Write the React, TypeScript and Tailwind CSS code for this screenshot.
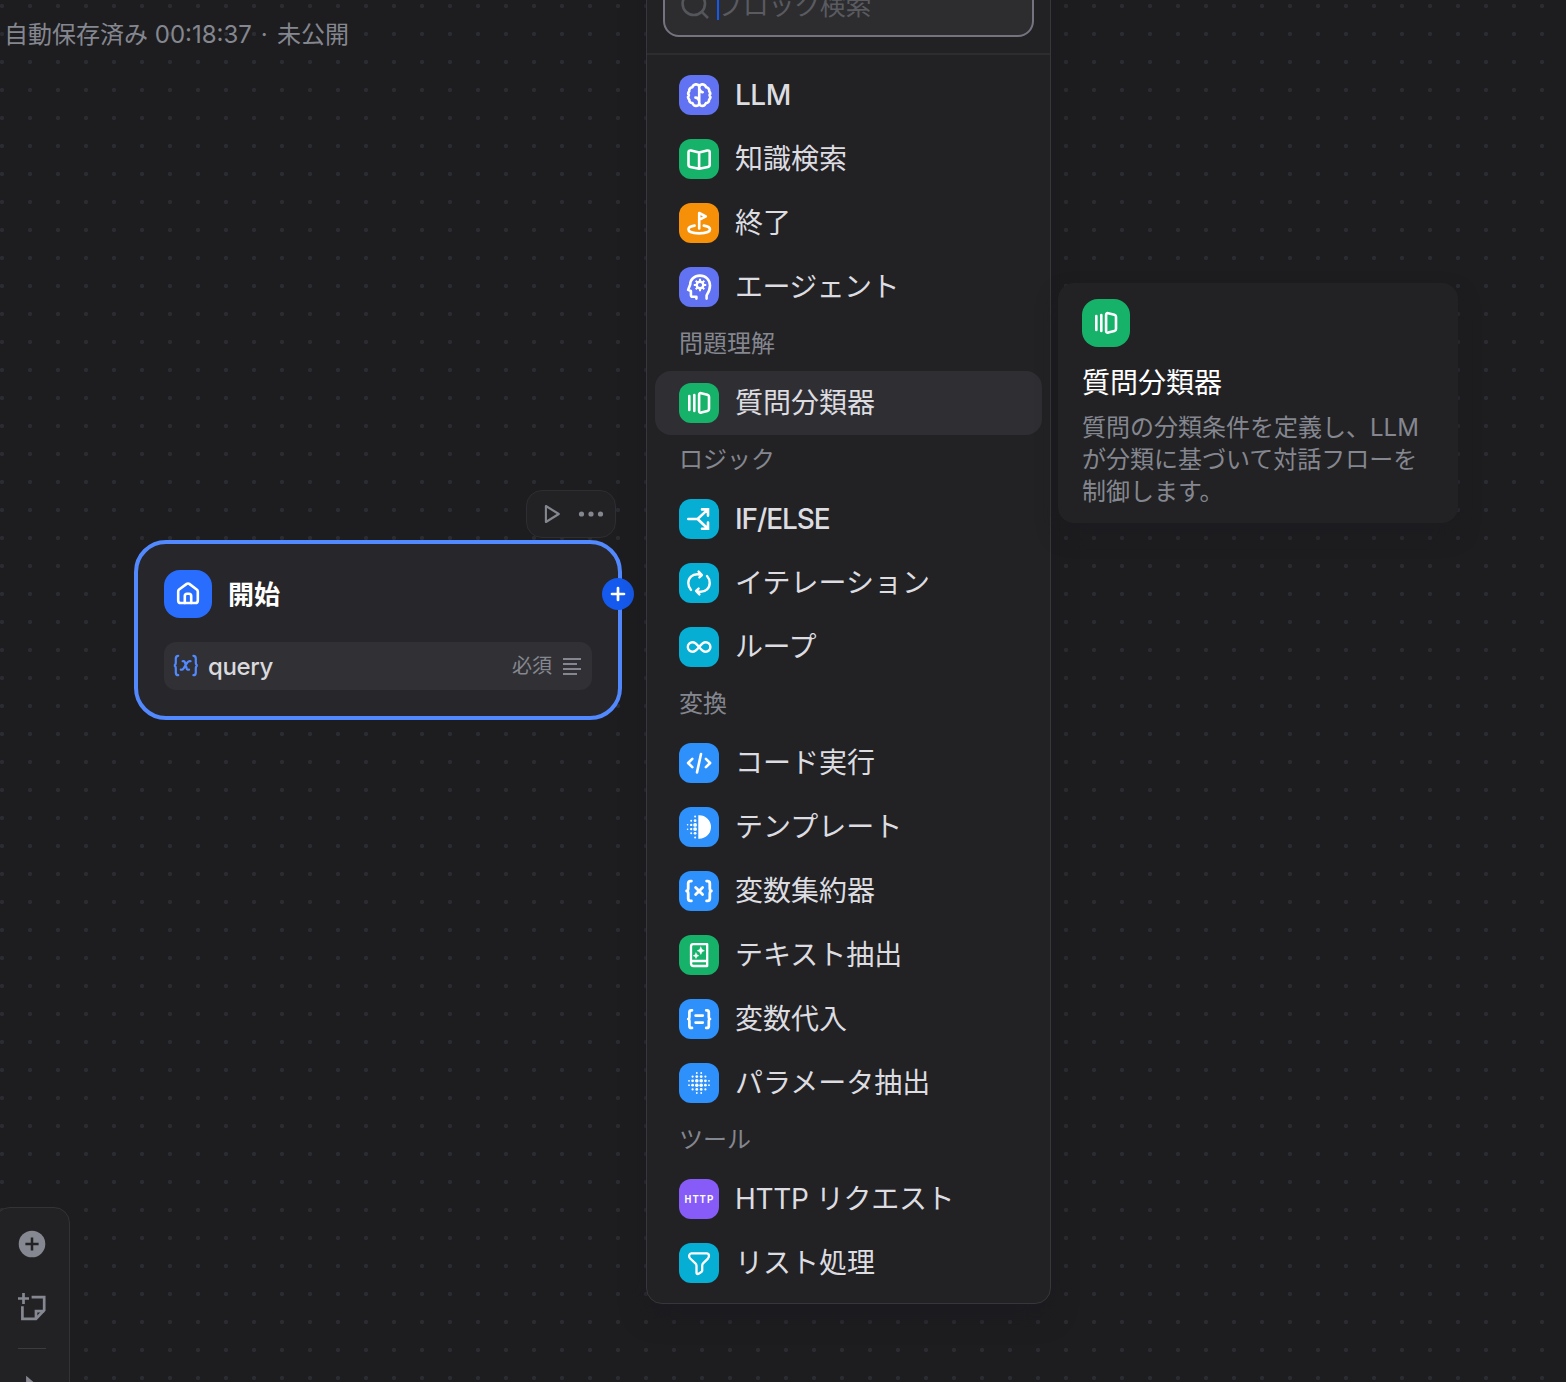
import React from 'react';

type IconName =
  | 'llm' | 'knowledge' | 'end' | 'agent' | 'classifier' | 'branch' | 'iteration' | 'loop'
  | 'code' | 'template' | 'aggregate' | 'document' | 'assign' | 'parameter' | 'http' | 'list';

const BRAIN_HALF =
  'M20.2 11.3C19.6 9.8 18.2 9.2 16.7 9.4C15 9.6 13.8 10.7 13.4 12.2C11.3 12.5 9.8 14.2 10.2 16.3C9 17.5 8.9 18.9 9.9 20.1C8.8 21.5 9 23.5 10.3 24.7C10.2 26.7 11.5 28.2 13.5 28.1C14.1 29.8 15.4 30.9 17 30.9C18.6 30.9 19.7 30.2 20.2 28.9';

const TEMPLATE_DOTS: [number, number, number][] = [
  [8.6, 17.8, 0.8], [8.6, 22.2, 0.8],
  [12.2, 13.8, 1], [12.2, 17.9, 1.2], [12.2, 22.1, 1.2], [12.2, 26.2, 1],
  [16.1, 9.6, 1], [16.1, 13.7, 1.4], [16.1, 17.9, 1.9], [16.1, 22.1, 1.9], [16.1, 26.3, 1.4], [16.1, 30.6, 1],
];

const GRID = [10, 13.6, 17.8, 22.2, 26.4, 30];
const GRID_RADIUS = [
  [0, 0, 0.9, 0.9, 0, 0],
  [0, 1.1, 1.4, 1.4, 1.1, 0],
  [0.9, 1.4, 1.8, 1.8, 1.4, 0.9],
  [0.9, 1.4, 1.8, 1.8, 1.4, 0.9],
  [0, 1.1, 1.4, 1.4, 1.1, 0],
  [0, 0, 0.9, 0.9, 0, 0],
];

const glyphs: Record<IconName, React.ReactNode> = {
  llm: (
    <>
      <path d={BRAIN_HALF} />
      <path d={BRAIN_HALF} transform="translate(40.4 0) scale(-1 1)" />
      <path d="M20.2 11v18M20.6 14.2c.3 1.8 1.4 2.8 3.2 3M19.8 25.4c-.2-1.8-1.4-2.8-3.4-2.8" />
    </>
  ),
  knowledge: (
    <path d="M20.1 13.6V29.6M20.1 13.6L12 11.6Q9.5 11.1 9.5 13.5V25.7Q9.5 27.5 11.3 27.9L20.1 29.8L28.9 27.9Q30.7 27.5 30.7 25.7V13.5Q30.7 11.1 28.2 11.6Z" />
  ),
  end: (
    <path d="M20.2 25.5V10L26.8 13.3L20.2 16.8M15.6 22.6C11.6 23.2 9.4 24.6 9.4 26.3C9.4 28.7 14 30.4 20.2 30.4S31 28.7 31 26.3C31 24.6 28.8 23.2 24.8 22.6" />
  ),
  agent: (
    <>
      <path d="M27.6 31.6V28.4C29.6 25.4 31 22 31 18.6C31 12.6 26.6 8.6 20.9 8.6C15.2 8.6 11.2 12.7 11.2 17.5L9.1 22.9L11.9 24V28Q11.9 29.8 13.7 29.8H17.4V31.6" />
      <circle cx="21" cy="18" r="3.3" strokeWidth="2.4" />
      <path strokeWidth="2" strokeLinecap="butt" d="M21 11.8v2.6M21 21.6v2.6M14.8 18h2.6M24.6 18h2.6M16.7 13.7l1.9 1.9M23.4 20.4l1.9 1.9M16.7 22.3l1.9-1.9M23.4 15.6l1.9-1.9" />
    </>
  ),
  classifier: (
    <path d="M10.3 13V27M15.3 12V28M20.1 12Q20.1 9.8 22.2 10.2L28.4 11.7Q30 12.1 30 13.8V26Q30 27.7 28.4 28.1L22.2 29.6Q20.1 30 20.1 27.8Z" />
  ),
  branch: (
    <path strokeLinejoin="miter" d="M9.3 20H18.6L28.4 10.9M18.6 20L28.4 29.3M23 10.4H29V16.6M23 29.8H29V23.6" />
  ),
  iteration: (
    <path strokeWidth="2.4" d="M12 27C10.2 25.1 9.3 22.7 9.3 20C9.3 14.6 13.4 11.2 18.2 11.2C19.8 11.2 21.1 11.5 22.3 11.9M19.6 8.6L22.9 12.1L20.4 14.4M28 13C29.8 14.9 30.7 17.3 30.7 20C30.7 25.4 26.6 28.8 21.8 28.8C20.2 28.8 18.9 28.5 17.7 28.1M20.4 31.4L17.1 27.9L19.6 25.6" />
  ),
  loop: (
    <path strokeWidth="2.4" d="M20.1 20C17.6 16.8 16 15.2 13.6 15.2A4.8 4.8 0 0 0 13.6 24.8C16 24.8 17.6 23.2 20.1 20C22.6 16.8 24.2 15.2 26.6 15.2A4.8 4.8 0 0 1 26.6 24.8C24.2 24.8 22.6 23.2 20.1 20Z" />
  ),
  code: <path d="M13.3 15.8L9.1 20L13.3 24.2M26.9 15.8L31.1 20L26.9 24.2M22 11L18 29.4" />,
  template: (
    <g fill="currentColor" stroke="none">
      <path d="M19.3 8.2H20.2A11.8 11.8 0 0 1 20.2 31.8H19.3Z" />
      {TEMPLATE_DOTS.map(([x, y, r], i) => <circle key={i} cx={x} cy={y} r={r} />)}
    </g>
  ),
  aggregate: (
    <path strokeWidth="2.8" d="M12.4 10.1H11.4Q9.2 10.1 9.2 12.4V17Q9.2 20 7.6 20Q9.2 20 9.2 23V27.6Q9.2 29.9 11.4 29.9H12.4M27.6 10.1H28.6Q30.8 10.1 30.8 12.4V17Q30.8 20 32.4 20Q30.8 20 30.8 23V27.6Q30.8 29.9 28.6 29.9H27.6M16.6 16.4L23.6 23.6M23.6 16.4L16.6 23.6" />
  ),
  document: (
    <>
      <path strokeWidth="2.3" d="M12 27.8V11.4Q12 9.2 14.2 9.2H28.2V26H13.8Q12 26 12 28.2Q12 31 14.6 31H28.2V26" />
      <path fill="currentColor" stroke="currentColor" strokeWidth="0.5" d="M21.8 12L23 14.6L25.4 15.7L23 16.8L21.8 19.4L20.6 16.8L18.2 15.7L20.6 14.6ZM17 17.9L17.9 19.8L19.8 20.7L17.9 21.6L17 23.5L16.1 21.6L14.2 20.7L16.1 19.8Z" />
    </>
  ),
  assign: (
    <path strokeWidth="2.7" d="M13 11.3H12.2Q10.4 11.3 10.4 13.3V17.4Q10.4 20 9.2 20Q10.4 20 10.4 22.6V26.9Q10.4 28.9 12.2 28.9H13M27.2 11.3H28Q29.8 11.3 29.8 13.3V17.4Q29.8 20 31 20Q29.8 20 29.8 22.6V26.9Q29.8 28.9 28 28.9H27.2M16.6 16.6H23.8M16.6 23.6H23.8" />
  ),
  parameter: (
    <g fill="currentColor" stroke="none">
      {GRID_RADIUS.map((row, y) =>
        row.map((r, x) => (r ? <circle key={`${x}-${y}`} cx={GRID[x]} cy={GRID[y]} r={r} /> : null)),
      )}
    </g>
  ),
  http: (
    <text x="5.6" y="24" fill="currentColor" stroke="none" fontSize="11.6" fontWeight="700" fontFamily="'Liberation Sans', sans-serif" letterSpacing="1.6" textLength="30" lengthAdjust="spacingAndGlyphs">
      HTTP
    </text>
  ),
  list: (
    <path strokeWidth="2.3" d="M12.4 10.4H27.8C30.2 10.4 30.6 13.4 28.9 15.6L24.3 20.1Q23.2 21.2 23.2 22.8V27.6Q23.2 28.6 22.3 29.1L19.2 30.9Q17.6 31.3 17.5 29.6V22.8Q17.5 21.4 16.4 20.4L11.2 15.5C9.4 13.4 10 10.4 12.4 10.4Z" />
  ),
};

function Glyph({ name, large }: { name: IconName; large?: boolean }) {
  return (
    <svg
      viewBox={large ? '-4 -4 48 48' : '0 0 40 40'}
      className="size-full text-white"
      fill="none"
      stroke="currentColor"
      strokeWidth="2.6"
      strokeLinecap="round"
      strokeLinejoin="round"
    >
      {glyphs[name]}
    </svg>
  );
}

interface Block { name: string; icon: IconName; color: string; active?: boolean; tracking?: string }
interface Group { title?: string; blocks: Block[] }

const INDIGO = 'bg-[#6172f3]';
const GREEN = 'bg-[#17b26a]';
const CYAN = 'bg-[#06aed4]';
const BLUE = 'bg-[#2e90fa]';

const groups: Group[] = [
  {
    blocks: [
      { name: 'LLM', icon: 'llm', color: INDIGO, tracking: 'font-[450] tracking-[-0.5px]' },
      { name: '知識検索', icon: 'knowledge', color: GREEN },
      { name: '終了', icon: 'end', color: 'bg-[#f79009]' },
      { name: 'エージェント', icon: 'agent', color: INDIGO, tracking: 'tracking-[-0.6px]' },
    ],
  },
  { title: '問題理解', blocks: [{ name: '質問分類器', icon: 'classifier', color: GREEN, active: true }] },
  {
    title: 'ロジック',
    blocks: [
      { name: 'IF/ELSE', icon: 'branch', color: CYAN, tracking: 'font-[450] tracking-[-1.1px]' },
      { name: 'イテレーション', icon: 'iteration', color: CYAN },
      { name: 'ループ', icon: 'loop', color: CYAN, tracking: 'tracking-[-0.4px]' },
    ],
  },
  {
    title: '変換',
    blocks: [
      { name: 'コード実行', icon: 'code', color: BLUE },
      { name: 'テンプレート', icon: 'template', color: BLUE },
      { name: '変数集約器', icon: 'aggregate', color: BLUE },
      { name: 'テキスト抽出', icon: 'document', color: GREEN },
      { name: '変数代入', icon: 'assign', color: BLUE },
      { name: 'パラメータ抽出', icon: 'parameter', color: BLUE },
    ],
  },
  {
    title: 'ツール',
    blocks: [
      { name: 'HTTP リクエスト', icon: 'http', color: 'bg-[#875bf7]', tracking: 'tracking-[-0.35px]' },
      { name: 'リスト処理', icon: 'list', color: CYAN },
    ],
  },
];

function BlockRow({ block }: { block: Block }) {
  return (
    <li className={`flex h-16 items-center gap-4 rounded-2xl px-6 ${block.active ? 'bg-[#2f2f33]' : ''}`}>
      <span className={`size-10 shrink-0 rounded-xl ${block.color}`}>
        <Glyph name={block.icon} />
      </span>
      <span className={`text-[28px] leading-10 whitespace-nowrap text-[#dcdce1] ${block.tracking ?? ''}`}>
        {block.name}
      </span>
    </li>
  );
}

function BlockMenu() {
  return (
    <div className="absolute bottom-[78px] left-[646px] w-[405px] rounded-2xl border border-[#37373b] bg-[#222224] shadow-[0_12px_24px_rgba(27,27,33,0.6)]">
      <div className="border-b-2 border-[#2d2d30] px-4 pt-4 pb-4">
        <div className="flex h-16 items-center rounded-2xl border-2 border-[#747481] bg-[#2d2d2f] pr-4 pl-4">
          <svg viewBox="0 0 28 28" className="size-7 shrink-0" fill="none" stroke="#55565c" strokeWidth="2.6">
            <circle cx="12.8" cy="12.8" r="11.2" />
            <path d="M20.8 20.8L27 27" />
          </svg>
          <span className="ml-2 h-7 w-0.5 translate-y-px bg-[#155aef]" />
          <span className="-ml-0.5 pt-0.5 text-[26px] leading-8 tracking-[-0.3px] text-[#5a5b61]">ブロック検索</span>
        </div>
      </div>
      <div className="p-2">
        {groups.map((group, i) => (
          <section key={i}>
            {group.title && (
              <h3 className="h-[52px] px-6 text-2xl leading-[50px] text-[#858790]">{group.title}</h3>
            )}
            <ul>
              {group.blocks.map((block) => <BlockRow key={block.name} block={block} />)}
            </ul>
          </section>
        ))}
      </div>
    </div>
  );
}

function BlockTooltip() {
  return (
    <div className="absolute top-[283px] left-[1058px] h-60 w-[400px] rounded-2xl bg-[#222224] px-6 pt-4 shadow-[0_12px_20px_rgba(27,27,33,0.5)]">
      <div className="size-12 rounded-2xl bg-[#17b26a]"><Glyph name="classifier" large /></div>
      <h2 className="mt-4 text-[28px] leading-10 text-white">質問分類器</h2>
      <p className="mt-[9px] text-2xl leading-8 text-[#858790]">
        質問の分類条件を定義し、LLM<br />が分類に基づいて対話フローを<br />制御します。
      </p>
    </div>
  );
}

function StartNode() {
  return (
    <div className="absolute top-[540px] left-[134px] h-[180px] w-[488px] rounded-[32px] border-4 border-[#5289ff] bg-[#27272b] p-[26px]">
      <div className="flex items-center gap-4">
        <div className="size-12 rounded-2xl bg-[#296dff]">
          <svg viewBox="0 0 48 48" className="size-full" fill="none" stroke="#fff" strokeWidth="2.6" strokeLinejoin="round" strokeLinecap="round">
            <path d="M14.2 21.5Q14.2 20.3 15.1 19.5L22.7 13.9Q24 13 25.3 13.9L32.7 19.5Q33.8 20.3 33.8 21.5V30.4Q33.8 33 31.2 33H16.8Q14.2 33 14.2 30.4Z" />
            <path d="M20.8 33V26Q20.8 23.8 23 23.8H25Q27.2 23.8 27.2 26V33" />
          </svg>
        </div>
        <span className="pt-0.5 text-[26px] leading-8 font-bold text-white">開始</span>
      </div>
      <div className="mt-6 flex h-12 items-center rounded-xl bg-[#313135] pr-2 pl-2">
        <svg viewBox="0 0 28 24" className="h-6 w-7" fill="none" stroke="#5289ff" strokeWidth="2.2" strokeLinecap="round">
          <path d="M6.2 1.8Q3.8 1.8 3.8 4.6V8.5Q3.8 11.5 1.8 11.5Q3.8 11.5 3.8 14.5V18.4Q3.8 21.2 6.2 21.2M21.4 1.8Q23.8 1.8 23.8 4.6V8.5Q23.8 11.5 25.8 11.5Q23.8 11.5 23.8 14.5V18.4Q23.8 21.2 21.4 21.2" />
          <path d="M10.6 7.2Q12.4 6.6 13 8.4L14.6 14.4Q15.2 16.2 17 15.6M18.6 7.2Q16.8 6.6 15.4 8.4L11.6 14.4Q10.4 16.2 8.8 15.6" />
        </svg>
        <span className="ml-2 pt-0.5 text-2xl leading-8 font-[450] tracking-[-0.4px] text-[#d9d9de]">query</span>
        <span className="ml-auto text-xl text-[#858790]">必須</span>
        <svg viewBox="0 0 24 24" className="ml-2 size-6" stroke="#858790" strokeWidth="2">
          <path d="M3 5H21M3 10H17M3 15H21M3 20H17" />
        </svg>
      </div>
      <span className="absolute top-[34px] -right-4 flex size-8 items-center justify-center rounded-full bg-[#155aef]">
        <svg viewBox="0 0 32 32" className="size-8" stroke="#fff" strokeWidth="2.7" strokeLinecap="round">
          <path d="M10 16H22M16 10V22" />
        </svg>
      </span>
    </div>
  );
}

function NodeActions() {
  return (
    <div className="absolute top-[490px] left-[526px] flex h-12 w-[90px] items-center rounded-2xl border border-[#2e2e32] bg-[#222224] pl-3">
      <svg viewBox="0 0 24 24" className="size-6" fill="none" stroke="#858790" strokeWidth="2.1" strokeLinejoin="round">
        <path d="M6.9 4L19.8 12L6.9 20Z" />
      </svg>
      <svg viewBox="0 0 28 24" className="ml-[14px] h-6 w-7" fill="#858790">
        <circle cx="4.5" cy="12" r="2.6" />
        <circle cx="14" cy="12" r="2.6" />
        <circle cx="23.5" cy="12" r="2.6" />
      </svg>
    </div>
  );
}

function CanvasTools() {
  return (
    <div className="absolute top-[1207px] -left-1.5 flex h-60 w-19 flex-col items-center rounded-2xl border border-[#333337] bg-[#222224] pt-5">
      <svg viewBox="0 0 32 32" className="size-8 shrink-0" fill="none">
        <circle cx="16" cy="16" r="13.3" fill="#858791" />
        <path d="M9.4 16H22.6M16 9.4V22.6" stroke="#222224" strokeWidth="2.5" />
      </svg>
      <svg viewBox="0 0 32 32" className="mt-[33px] size-8 shrink-0" fill="none" stroke="#858791" strokeWidth="2.7">
        <path d="M2 5.5H13M7.5 0V11" />
        <path d="M15.6 4.2H28.2V17.2L20 25.8H6.4V13.2" />
        <path d="M28.2 18.2H20V25.8" />
      </svg>
      <div className="mt-[23px] h-px w-7 shrink-0 bg-[#3c3c40]" />
      <svg viewBox="0 0 32 32" className="mt-6 size-8 shrink-0" fill="none" stroke="#858791" strokeWidth="2.6">
        <path d="M11.4 5.6L26 18L18.4 18.8L22.4 27L19 28.6L15.2 20.4L11.4 24.6Z" />
      </svg>
    </div>
  );
}

export default function App() {
  return (
    <main className="relative h-[1382px] w-[1566px] overflow-hidden bg-[#1d1d1f] bg-[radial-gradient(circle_at_14px_14px,#2b2b32_1.8px,transparent_2.4px)] bg-[length:28px_28px] bg-[position:-12px_-8px] font-[Inter,'Noto_Sans_CJK_JP',sans-serif]">
      <p className="pt-[17px] pl-1 text-2xl leading-9 text-[#858790]">
        自動保存済み 00:18:37<span className="ml-px tracking-[1.2px]"> · </span>未公開
      </p>
      <NodeActions />
      <StartNode />
      <BlockMenu />
      <BlockTooltip />
      <CanvasTools />
    </main>
  );
}
